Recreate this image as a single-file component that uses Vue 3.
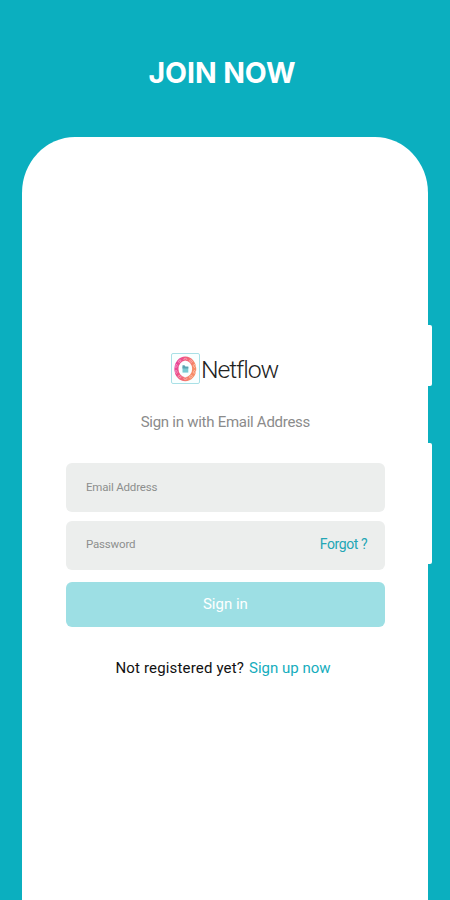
<script setup>
import { ref } from 'vue'

const email = ref('')
const password = ref('')
const petals = Array.from({ length: 10 }, (_, i) => i * 36)
</script>

<template>
  <main class="screen">
    <h1 class="headline">JOIN NOW</h1>
    <div class="phone">
      <span class="side-key volume"></span>
      <span class="side-key power"></span>
      <div class="brand">
        <svg class="logo" viewBox="0 0 30 32" aria-hidden="true">
          <defs>
            <linearGradient id="ring" x1="0" y1="0" x2="1" y2="0.35">
              <stop offset="0" stop-color="#e8409f" />
              <stop offset="0.5" stop-color="#f0607c" />
              <stop offset="1" stop-color="#f78d68" />
            </linearGradient>
          </defs>
          <rect x="1.5" y="1.5" width="28" height="30" rx="1.5" fill="#f9ffff" stroke="#a9e0e6" />
          <ellipse cx="15.3" cy="16.9" rx="8.9" ry="10.3" fill="none" stroke="url(#ring)" stroke-width="4.1" />
          <g fill="none" stroke="#fff" stroke-width="0.6" stroke-opacity="0.55">
            <ellipse
              v-for="angle in petals"
              :key="angle"
              cx="15.3"
              cy="7.3"
              rx="1.5"
              ry="1"
              :transform="`rotate(${angle} 15.3 16.9)`"
            />
          </g>
          <path d="M12.5 14.6h5.8v6h-5.8z" fill="#79cbd3" />
          <path d="M12.5 14.8v-1.5h2l1 1.5h2.8v1.6h-5.8z" fill="#5ba3b1" />
        </svg>
        <span class="wordmark">Netflow</span>
      </div>
      <p class="subtitle">Sign in with Email Address</p>
      <form class="form" @submit.prevent>
        <label class="field">
          <input v-model="email" type="text" placeholder="Email Address" />
        </label>
        <label class="field">
          <input v-model="password" type="password" placeholder="Password" />
          <span class="forgot">Forgot ?</span>
        </label>
        <button class="submit" type="submit">Sign in</button>
      </form>
      <p class="register"><span>Not registered yet?</span><a>Sign up now</a></p>
    </div>
  </main>
</template>

<style>
body {
  margin: 0;
}
</style>

<style scoped>
.screen {
  box-sizing: border-box;
  width: 450px;
  height: 900px;
  overflow: hidden;
  background: #0bafbf;
  font-family: Roboto, "Liberation Sans", sans-serif;
}
.headline {
  box-sizing: border-box;
  height: 137px;
  margin: 0;
  padding: 56px 6px 0 0;
  color: #fff;
  font: 700 28.5px/34px Inter, sans-serif;
  letter-spacing: -0.1px;
  text-align: center;
}
.phone {
  position: relative;
  box-sizing: border-box;
  width: 405.5px;
  height: 763px;
  margin-left: 22.3px;
  padding: 215px 42.5px 0 44.2px;
  border-radius: 53px 53px 0 0 / 56px 56px 0 0;
  background: #fff;
}
.side-key {
  position: absolute;
  left: 100%;
  width: 4.4px;
  border-radius: 0 2px 2px 0;
  background: #fff;
}
.volume {
  top: 188px;
  height: 61px;
}
.power {
  top: 306px;
  height: 121px;
}
.brand {
  display: flex;
  height: 32px;
  padding-left: 104px;
}
.logo {
  width: 30px;
  height: 32px;
}
.wordmark {
  margin-left: 0.5px;
  color: #222;
  font: 300 24.8px/36px Roboto, sans-serif;
  letter-spacing: -1.1px;
  white-space: nowrap;
}
.subtitle {
  margin: 27px 0 0;
  padding-right: 1px;
  color: #8b8b8b;
  font-size: 15px;
  letter-spacing: -0.27px;
  line-height: 22px;
  text-align: center;
}
.form {
  display: flex;
  flex-direction: column;
  margin-top: 30px;
}
.field {
  display: flex;
  align-items: center;
  box-sizing: border-box;
  height: 49px;
  margin-bottom: 8.5px;
  padding: 0 18px 1.5px 19.5px;
  border-radius: 6px;
  background: #eceeed;
}
.field input {
  flex: 1;
  min-width: 0;
  padding: 0;
  border: 0;
  outline: 0;
  background: transparent;
  font: 11.5px/16px Roboto, sans-serif;
  letter-spacing: -0.18px;
}
.field input::placeholder {
  color: #8d8f8e;
  opacity: 1;
}
.forgot {
  color: #23a6b5;
  font-size: 14px;
  letter-spacing: -0.4px;
  line-height: 18px;
}
.submit {
  height: 45px;
  margin-top: 4px;
  padding: 0 1px 2px 0;
  border: 0;
  border-radius: 6px;
  background: #9ddfe4;
  color: #fff;
  font: 15px/20px Roboto, sans-serif;
}
.register {
  display: flex;
  gap: 5px;
  margin: 31px 0 0;
  padding-left: 49px;
  color: #111;
  font-size: 15px;
  letter-spacing: 0.16px;
  line-height: 20px;
  white-space: nowrap;
}
.register a {
  color: #15adbd;
  letter-spacing: 0;
}
</style>
